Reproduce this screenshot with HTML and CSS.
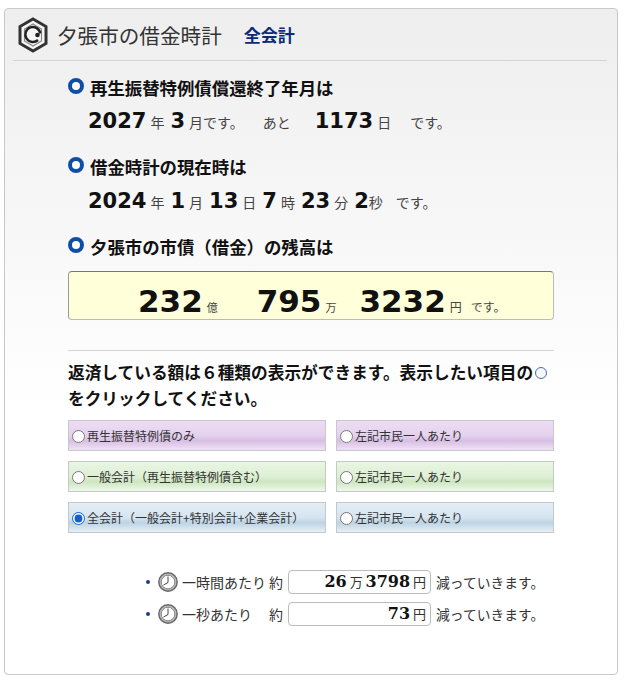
FILE: index.html
```html
<!DOCTYPE html>
<html lang="ja">
<head>
    <meta charset="UTF-8">
    <title>夕張市の借金時計</title>
    <link rel="stylesheet" href="styles.css">
</head>
<body>

<div class="card">
    <div class="header">
        <svg class="logo" width="30" height="36" viewBox="0 0 30 36">
            <polygon points="15,2 28,9.5 28,26.5 15,34 2,26.5 2,9.5" fill="#f6f6f6" stroke="#333" stroke-width="3"/>
            <polygon points="15,7 23.5,12 23.5,24 15,29 6.5,24 6.5,12" fill="none" stroke="#888" stroke-width="1.2"/>
            <path d="M20 23A7.5 7.5 0 1 1 22.3 16.5" fill="none" stroke="#222" stroke-width="2.4"/>
            <circle cx="19.5" cy="18" r="2.3" fill="#222"/>
        </svg>
        <span class="title">夕張市の借金時計</span>
        <span class="mode">全会計</span>
    </div>

    <div class="content">
        <h2><span class="dot"></span>再生振替特例債償還終了年月は</h2>
        <p class="values first"><b>2027</b><span class="unit">年</span><b>3</b><span class="unit">月です。</span><span class="gap-a">あと</span><b class="gap-b">1173</b><span class="unit">日</span><span class="gap-c">です。</span></p>

        <h2><span class="dot"></span>借金時計の現在時は</h2>
        <p class="values"><b>2024</b><span class="unit">年</span><b>1</b><span class="unit">月</span><b>13</b><span class="unit">日</span><b>7</b><span class="unit">時</span><b>23</b><span class="unit">分</span><b>2</b>秒<span class="gap-c">です。</span></p>

        <h2><span class="dot"></span>夕張市の市債（借金）の残高は</h2>
        <div class="balance">
            <b>232</b><small>億</small><b class="gap-oku">795</b><small>万</small><b class="gap-man">3232</b><small class="yen">円</small><small class="desu">です。</small>
        </div>

        <hr>

        <p class="note">返済している額は６種類の表示ができます。表示したい項目の<span class="ring"></span><br>をクリックしてください。</p>

        <div class="choices">
            <label class="choice purple"><input type="radio" name="kind">再生振替特例債のみ</label>
            <label class="choice purple"><input type="radio" name="kind">左記市民一人あたり</label>
            <label class="choice green"><input type="radio" name="kind">一般会計（再生振替特例債含む）</label>
            <label class="choice green"><input type="radio" name="kind">左記市民一人あたり</label>
            <label class="choice blue"><input type="radio" name="kind" checked>全会計（一般会計+特別会計+企業会計）</label>
            <label class="choice blue"><input type="radio" name="kind">左記市民一人あたり</label>
        </div>
    </div>

    <div class="rates">
        <div class="rate">
            <span class="bullet"></span>
            <svg class="clock" width="20" height="20" viewBox="0 0 20 20">
                <circle cx="10" cy="10" r="9.2" fill="#bbb" stroke="#666" stroke-width="1.4"/>
                <circle cx="10" cy="10" r="6.8" fill="#fff" stroke="#888" stroke-width="1"/>
                <path d="M10 4.5V10.5L5.5 13" fill="none" stroke="#444" stroke-width="1"/>
            </svg>
            <span class="rate-label">一時間あたり</span>
            <span class="about">約</span>
            <div class="amount"><b>26</b> 万 <b>3798</b> 円</div>
            <span>減っていきます。</span>
        </div>
        <div class="rate">
            <span class="bullet"></span>
            <svg class="clock" width="20" height="20" viewBox="0 0 20 20">
                <circle cx="10" cy="10" r="9.2" fill="#bbb" stroke="#666" stroke-width="1.4"/>
                <circle cx="10" cy="10" r="6.8" fill="#fff" stroke="#888" stroke-width="1"/>
                <path d="M10 4.5V10.5L5.5 13" fill="none" stroke="#444" stroke-width="1"/>
            </svg>
            <span class="rate-label">一秒あたり</span>
            <span class="about">約</span>
            <div class="amount"><b>73</b> 円</div>
            <span>減っていきます。</span>
        </div>
    </div>
</div>

</body>
</html>
```

FILE: styles.css
```css
body {
    margin: 0;
    padding: 8px 7px 5px 4px;
    background: #fff;
    color: #222;
    font-family: "Noto Sans CJK JP", "Liberation Sans", sans-serif;
}
.card {
    height: 665px;
    border: 1px solid #c8c8c8;
    border-radius: 4px;
    background: linear-gradient(#eeeeee, #ffffff 400px);
    padding: 0 10px 0 8px;
}
.header {
    display: flex;
    align-items: center;
    height: 51px;
    border-bottom: 1px solid #d4d4d4;
    padding-left: 5px;
}
.logo {
    margin-right: 9px;
}
.title {
    font-size: 20.6px;
    color: #333;
}
.mode {
    margin: -1px 0 0 22px;
    font-size: 17px;
    font-weight: bold;
    color: #0b2a78;
}
.content {
    margin: 0 53px 0 55px;
}
h2 {
    display: flex;
    align-items: center;
    margin: 0;
    height: 26px;
    font-size: 17.4px;
    line-height: 26px;
    font-weight: bold;
    color: #111;
}
.content h2:first-child {
    margin-top: 14px;
}
.dot {
    flex: none;
    box-sizing: border-box;
    width: 16px;
    height: 16px;
    margin: -5px 6px 0 0;
    border: 4px solid #0f4ea6;
    border-radius: 50%;
    background: #fff;
}
.values {
    margin: 7px 0 19px 20px;
    height: 28px;
    font-size: 14px;
    line-height: 28px;
    color: #444;
    white-space: nowrap;
}
.values.first {
    margin-top: 6px;
}
.values b {
    font-family: "DejaVu Sans", sans-serif;
    font-size: 21px;
    color: #111;
}
.unit {
    margin: 0 6px 0 4px;
}
.gap-a {
    margin-left: 13px;
}
.gap-b {
    margin-left: 24px;
}
.gap-c {
    margin-left: 13px;
}
.balance {
    margin-top: 11px;
    height: 47px;
    border: 1px solid #bbb;
    border-top-color: #777;
    border-left-color: #999;
    border-radius: 4px;
    background: #ffffd9;
    padding-left: 69px;
    line-height: 59px;
    white-space: nowrap;
}
.balance b {
    font-family: "DejaVu Sans", sans-serif;
    font-size: 31px;
    color: #111;
}
.balance small {
    margin-left: 4px;
    font-size: 11px;
    color: #444;
}
.gap-oku {
    margin-left: 39px;
}
.gap-man {
    margin-left: 23px;
}
.balance .yen {
    font-size: 12px;
}
.balance .desu {
    margin-left: 9px;
    font-size: 12px;
}
hr {
    margin: 30px 0 0;
    border: 0;
    border-top: 1px solid #d4d4d4;
}
.note {
    margin: 8px 0 0;
    font-size: 16.7px;
    line-height: 26px;
    font-weight: bold;
    color: #111;
}
.ring {
    display: inline-block;
    width: 10px;
    height: 10px;
    margin-left: 2px;
    border: 1.5px solid #4c6f96;
    border-radius: 50%;
    background: #f4f8fb;
}
.choices {
    display: grid;
    grid-template-columns: 258px 218px;
    grid-auto-rows: 31px;
    gap: 10px;
    margin-top: 9px;
}
.choice {
    display: flex;
    align-items: center;
    box-sizing: border-box;
    border: 1px solid #c8c8c8;
    padding-left: 3px;
    font-size: 12px;
    color: #333;
    white-space: nowrap;
}
.choice input {
    width: 13px;
    height: 13px;
    margin: 1px 2px 0 0;
    accent-color: #0f5fd0;
}
.purple {
    background: linear-gradient(#eddcf3, #e5d2ee 50%, #d7bee3 68%, #f0e2f5);
}
.green {
    background: linear-gradient(#e9f5e3, #ddf0d4 50%, #cde6c0 68%, #eef8ea);
}
.blue {
    background: linear-gradient(#e3eef6, #d6e5f0 50%, #bdd3e4 68%, #e6f0f7);
}
.rates {
    margin-top: 37px;
    padding-left: 133px;
}
.rate {
    display: flex;
    align-items: center;
    height: 24px;
    margin-bottom: 8px;
    font-size: 13.8px;
    color: #333;
    white-space: nowrap;
}
.bullet {
    width: 4px;
    height: 4px;
    margin-right: 8px;
    border-radius: 50%;
    background: #1f3f86;
}
.clock {
    margin-right: 4px;
}
.rate-label {
    width: 87px;
    font-size: 14px;
}
.about {
    width: 15px;
    margin-right: 4px;
    font-size: 14px;
}
.amount {
    box-sizing: border-box;
    width: 143px;
    height: 24px;
    margin-right: 5px;
    padding-right: 4px;
    border: 1px solid #bbb;
    border-radius: 4px;
    background: #fff;
    text-align: right;
    font-size: 13px;
    line-height: 22px;
}
.amount b {
    font-family: "DejaVu Serif", serif;
    font-size: 16px;
    color: #111;
}
```
